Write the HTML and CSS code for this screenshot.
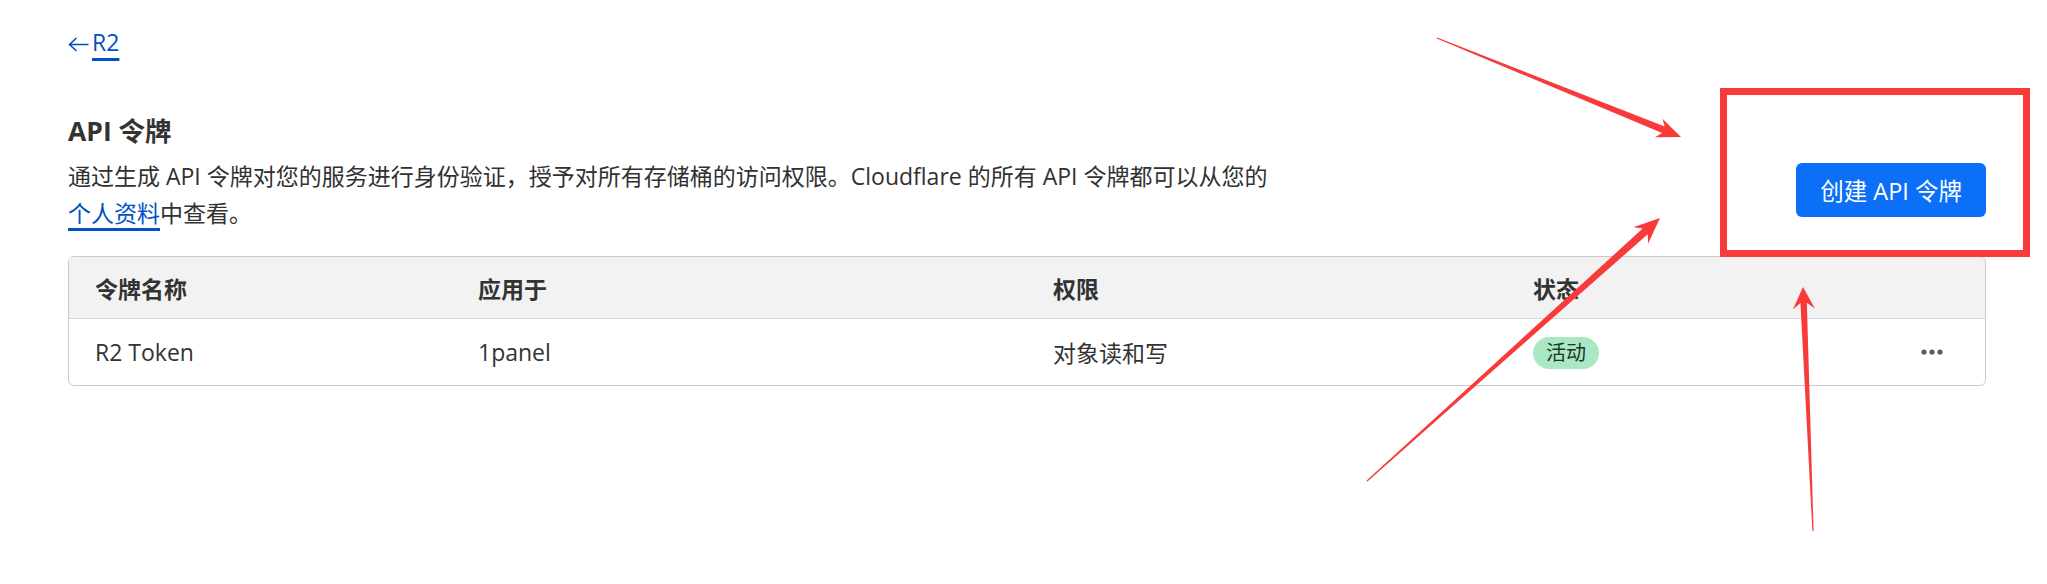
FILE: index.html
```html
<!DOCTYPE html>
<html lang="zh-CN">
<head>
    <meta charset="UTF-8">
    <meta name="viewport" content="width=device-width, initial-scale=1.0">
    <title>R2 - API 令牌</title>
    <link rel="stylesheet" href="styles.css">
</head>
<body>
    <div class="page">
        <a class="back-link" href="#">
            <svg class="back-arrow" width="21" height="15" viewBox="0 0 21 15">
                <path d="M1.5 7.5H20.5M8.5 1L1.5 7.5L8.5 14" fill="none" stroke="#0051c3" stroke-width="1.6"/>
            </svg><span>R2</span>
        </a>

        <div class="head">
            <div class="head-text">
                <h1>API 令牌</h1>
                <p>通过生成 API 令牌对您的服务进行身份验证，授予对所有存储桶的访问权限。Cloudflare 的所有 API 令牌都可以从您的<br><a href="#">个人资料</a>中查看。</p>
            </div>
            <button class="btn-create">创建 API 令牌</button>
        </div>

        <div class="tokens">
            <div class="tokens-row tokens-head">
                <div class="cell">令牌名称</div>
                <div class="cell">应用于</div>
                <div class="cell">权限</div>
                <div class="cell">状态</div>
                <div class="cell"></div>
            </div>
            <div class="tokens-row">
                <div class="cell">R2 Token</div>
                <div class="cell">1panel</div>
                <div class="cell">对象读和写</div>
                <div class="cell"><span class="badge">活动</span></div>
                <div class="cell cell-actions">
                    <svg width="22" height="6" viewBox="0 0 22 6">
                        <circle cx="3" cy="3" r="2.6" fill="#5a5a5a"/>
                        <circle cx="11" cy="3" r="2.6" fill="#5a5a5a"/>
                        <circle cx="19" cy="3" r="2.6" fill="#5a5a5a"/>
                    </svg>
                </div>
            </div>
        </div>
    </div>

    <!-- 标注 -->
    <svg class="marks" width="2047" height="584" viewBox="0 0 2047 584">
        <rect x="1723.5" y="91.5" width="303" height="162" fill="none" stroke="#f93a3a" stroke-width="7"/>
        <polygon fill="#f93a3a" transform="translate(1437 38) rotate(22.08)" points="0,-0.5 244.3,-3.5 239.3,-10 263.3,0 239.3,10 244.3,3.5 0,0.5"/>
        <polygon fill="#f93a3a" transform="translate(1367 481) rotate(-41.9)" points="0,-0.6 373.7,-3.8 367.7,-11 393.7,0 367.7,11 373.7,3.8 0,0.6"/>
        <polygon fill="#f93a3a" transform="translate(1813 531) rotate(-92.35)" points="0,-0.6 228.2,-3.2 222.2,-11 244.2,0 222.2,11 228.2,3.2 0,0.6"/>
    </svg>
</body>
</html>
```

FILE: styles.css
```css
body {
    margin: 0;
    font-family: "Open Sans", "Noto Sans CJK SC", sans-serif;
    font-size: 23px;
    color: #333;
    background: #fff;
    position: relative;
    height: 584px;
    overflow: hidden;
}

.page {
    padding: 27px 61px 0 68px;
}

a {
    color: #0051c3;
    text-decoration: underline;
    text-decoration-thickness: 2.5px;
    text-underline-offset: 6px;
}

.back-link {
    display: inline-flex;
    align-items: center;
    line-height: 30px;
    text-decoration: none;
}

.back-link span {
    text-decoration: underline;
    text-decoration-thickness: 3px;
    text-underline-offset: 7px;
    margin-left: 3px;
}

.back-arrow {
    margin-top: 5px;
}

.head {
    display: flex;
    justify-content: space-between;
    align-items: flex-start;
    margin-top: 55px;
}

.head h1 {
    margin: 0;
    font-size: 26.5px;
    line-height: 34px;
    font-weight: 700;
    color: #333;
}

.head p {
    margin: 10px 0 0;
    line-height: 37px;
    color: #313131;
}

.btn-create {
    margin-top: 49px;
    height: 54px;
    padding: 0 24px;
    border: none;
    border-radius: 6px;
    background: #0b6ff7;
    color: #fff;
    font-family: inherit;
    font-size: 23.5px;
    cursor: pointer;
}

.tokens {
    margin-top: 24px;
    border: 1px solid #c9c9c9;
    border-radius: 6px;
    overflow: hidden;
}

.tokens-row {
    display: grid;
    grid-template-columns: 383px 575px 480px 1fr 120px;
    align-items: center;
    height: 66px;
}

.tokens-head {
    height: 62px;
    box-sizing: border-box;
    background: #f2f2f2;
    border-bottom: 1px solid #d6d6d6;
    font-weight: 700;
}

.cell {
    padding-left: 26px;
}

.cell-actions {
    display: flex;
    justify-content: flex-end;
    padding-right: 42px;
}

.badge {
    display: inline-block;
    height: 32px;
    line-height: 32px;
    padding: 0 13px;
    border-radius: 16px;
    background: #a9e8c2;
    color: #1c3527;
    font-size: 20px;
}

.marks {
    position: absolute;
    top: 0;
    left: 0;
    pointer-events: none;
}
```
